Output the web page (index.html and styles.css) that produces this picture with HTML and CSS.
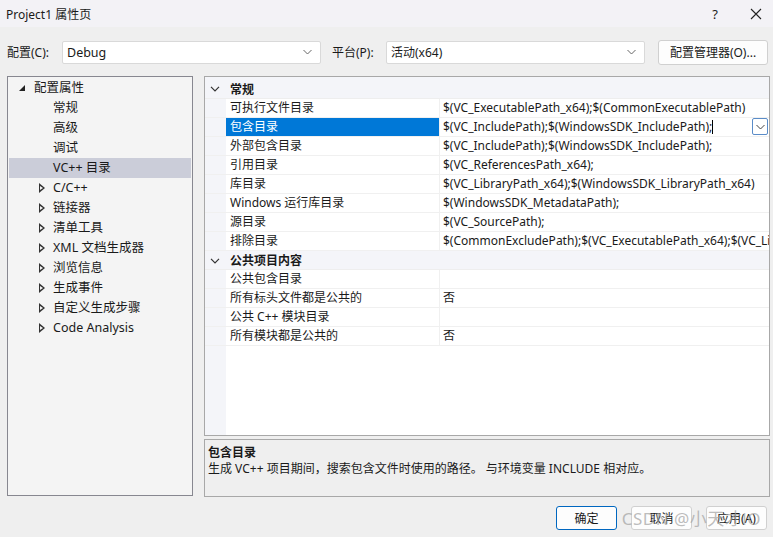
FILE: index.html
```html
<!DOCTYPE html>
<html lang="zh-CN">
<head>
    <meta charset="UTF-8">
    <title>Project1 属性页</title>
    <link rel="stylesheet" href="styles.css">
</head>
<body>
    <div class="dialog">
        <!-- Title bar -->
        <div class="titlebar">
            <span class="title">Project1 属性页</span>
            <span class="title-btns">
                <span class="help">?</span>
                <svg class="close" width="12" height="12" viewBox="0 0 12 12"><path d="M1 1L11 11M11 1L1 11" stroke="#222" stroke-width="1.1" fill="none"/></svg>
            </span>
        </div>

        <!-- Config row -->
        <div class="config-row">
            <label class="lbl">配置(C):</label>
            <div class="combo combo-config">
                <span>Debug</span>
                <svg class="chev" width="9" height="6" viewBox="0 0 9 6"><path d="M0.5 1L4.5 5L8.5 1" stroke="#666" fill="none"/></svg>
            </div>
            <label class="lbl lbl-platform">平台(P):</label>
            <div class="combo combo-platform">
                <span>活动(x64)</span>
                <svg class="chev" width="9" height="6" viewBox="0 0 9 6"><path d="M0.5 1L4.5 5L8.5 1" stroke="#666" fill="none"/></svg>
            </div>
            <button class="btn btn-manager">配置管理器(O)...</button>
        </div>

        <!-- Main area -->
        <div class="main">
            <div class="tree">
                <div class="tree-row lvl0"><span class="expanded"></span>配置属性</div>
                <div class="tree-row lvl1">常规</div>
                <div class="tree-row lvl1">高级</div>
                <div class="tree-row lvl1">调试</div>
                <div class="tree-row lvl1 selected">VC++ 目录</div>
                <div class="tree-row lvl1"><span class="collapsed"></span>C/C++</div>
                <div class="tree-row lvl1"><span class="collapsed"></span>链接器</div>
                <div class="tree-row lvl1"><span class="collapsed"></span>清单工具</div>
                <div class="tree-row lvl1"><span class="collapsed"></span>XML 文档生成器</div>
                <div class="tree-row lvl1"><span class="collapsed"></span>浏览信息</div>
                <div class="tree-row lvl1"><span class="collapsed"></span>生成事件</div>
                <div class="tree-row lvl1"><span class="collapsed"></span>自定义生成步骤</div>
                <div class="tree-row lvl1"><span class="collapsed"></span>Code Analysis</div>
            </div>

            <div class="right">
                <div class="grid">
                    <div class="cat-row first">
                        <svg class="cat-chev" width="10" height="6" viewBox="0 0 10 6"><path d="M1 0.8L5 4.8L9 0.8" stroke="#333" stroke-width="1.2" fill="none"/></svg>
                        <span>常规</span>
                    </div>
                    <div class="prop-row"><div class="name">可执行文件目录</div><div class="value">$(VC_ExecutablePath_x64);$(CommonExecutablePath)</div></div>
                    <div class="prop-row active"><div class="name">包含目录</div><div class="value">$(VC_IncludePath);$(WindowsSDK_IncludePath);<span class="caret"></span>
                        <span class="drop"><svg width="9" height="6" viewBox="0 0 9 6"><path d="M0.5 1L4.5 5L8.5 1" stroke="#444" fill="none"/></svg></span></div></div>
                    <div class="prop-row"><div class="name">外部包含目录</div><div class="value">$(VC_IncludePath);$(WindowsSDK_IncludePath);</div></div>
                    <div class="prop-row"><div class="name">引用目录</div><div class="value">$(VC_ReferencesPath_x64);</div></div>
                    <div class="prop-row"><div class="name">库目录</div><div class="value">$(VC_LibraryPath_x64);$(WindowsSDK_LibraryPath_x64)</div></div>
                    <div class="prop-row"><div class="name">Windows 运行库目录</div><div class="value">$(WindowsSDK_MetadataPath);</div></div>
                    <div class="prop-row"><div class="name">源目录</div><div class="value">$(VC_SourcePath);</div></div>
                    <div class="prop-row"><div class="name">排除目录</div><div class="value">$(CommonExcludePath);$(VC_ExecutablePath_x64);$(VC_LibraryPath_x64)</div></div>
                    <div class="cat-row">
                        <svg class="cat-chev" width="10" height="6" viewBox="0 0 10 6"><path d="M1 0.8L5 4.8L9 0.8" stroke="#333" stroke-width="1.2" fill="none"/></svg>
                        <span>公共项目内容</span>
                    </div>
                    <div class="prop-row"><div class="name">公共包含目录</div><div class="value"></div></div>
                    <div class="prop-row"><div class="name">所有标头文件都是公共的</div><div class="value">否</div></div>
                    <div class="prop-row"><div class="name">公共 C++ 模块目录</div><div class="value"></div></div>
                    <div class="prop-row"><div class="name">所有模块都是公共的</div><div class="value">否</div></div>
                    <div class="gutter-fill"></div>
                </div>
                <div class="desc">
                    <div class="desc-title">包含目录</div>
                    <div class="desc-text">生成 VC++ 项目期间，搜索包含文件时使用的路径。 与环境变量 INCLUDE 相对应。</div>
                </div>
            </div>
        </div>

        <!-- Bottom buttons -->
        <div class="footer">
            <button class="btn btn-ok">确定</button>
            <button class="btn">取消</button>
            <button class="btn">应用(A)</button>
            <span class="watermark">CSDN @小天才lO</span>
        </div>
    </div>
</body>
</html>
```

FILE: styles.css
```css
body {
    margin: 0;
    padding: 0;
    background: #efefef;
    font-family: "Noto Sans", "Noto Sans CJK SC", sans-serif;
    font-size: 12px;
    color: #1a1a1a;
}

.dialog {
    width: 773px;
    height: 537px;
    display: flex;
    flex-direction: column;
    overflow: hidden;
    position: relative;
}

/* Title bar */
.titlebar {
    height: 27px;
    background: #f3f2f6;
    display: flex;
    align-items: center;
    justify-content: space-between;
    padding: 0 11px 0 6px;
    flex-shrink: 0;
}
.title {
    font-size: 12px;
}
.title-btns {
    display: flex;
    align-items: center;
    gap: 32px;
}
.help {
    font-size: 13px;
}

/* Config row */
.config-row {
    display: flex;
    align-items: center;
    height: 26px;
    margin-top: 12px;
    padding-left: 7px;
}
.lbl {
    width: 55px;
    font-size: 12px;
}
.lbl-platform {
    width: 54px;
    margin-left: 11px;
}
.combo {
    width: 259px;
    height: 23px;
    box-sizing: border-box;
    background: #fff;
    border: 1px solid #d9d9d9;
    border-radius: 2px;
    display: flex;
    align-items: center;
    justify-content: space-between;
    padding: 0 8px 0 4px;
    font-size: 12.5px;
}
.combo-platform {
    font-size: 12px;
}
.btn {
    font-family: inherit;
    font-size: 12px;
    background: #fdfdfd;
    border: 1px solid #d0d0d0;
    border-radius: 3px;
    height: 25px;
    padding: 0;
    color: #1a1a1a;
}
.btn-manager {
    width: 110px;
    margin-left: 13px;
}

/* Main */
.main {
    display: flex;
    margin-top: 11px;
    padding-left: 7px;
    gap: 10px;
}
.tree {
    width: 186px;
    height: 420px;
    box-sizing: border-box;
    background: #f4f4f4;
    border: 1px solid #878790;
    padding: 1px 1px;
    font-size: 12.5px;
}
.tree-row {
    height: 20px;
    line-height: 20px;
    position: relative;
    white-space: nowrap;
}
.tree-row.lvl0 {
    padding-left: 25px;
}
.tree-row.lvl1 {
    padding-left: 44px;
}
.tree-row.selected {
    background: #cbcdd9;
}
.expanded {
    position: absolute;
    left: 10px;
    top: 7px;
    width: 0;
    height: 0;
    border-left: 6px solid transparent;
    border-bottom: 6px solid #222;
}
.collapsed {
    position: absolute;
    left: 30px;
    top: 5px;
    width: 6px;
    height: 10px;
}
.collapsed::before {
    content: "";
    position: absolute;
    left: 0;
    top: 0;
    border-top: 5px solid transparent;
    border-bottom: 5px solid transparent;
    border-left: 6px solid #333;
}
.collapsed::after {
    content: "";
    position: absolute;
    left: 1px;
    top: 2.5px;
    border-top: 2.5px solid transparent;
    border-bottom: 2.5px solid transparent;
    border-left: 3px solid #f4f4f4;
}

/* Property grid */
.right {
    width: 566px;
    display: flex;
    flex-direction: column;
    gap: 3px;
    margin-left: 1px;
}
.grid {
    height: 360px;
    box-sizing: border-box;
    background: #fff;
    border: 1px solid #a8a8a8;
    overflow: hidden;
    display: flex;
    flex-direction: column;
}
.cat-row {
    height: 19px;
    flex-shrink: 0;
    display: flex;
    align-items: center;
    background: #f4f5f9;
    font-weight: bold;
    padding-left: 25px;
    position: relative;
    border-bottom: 1px solid #eeeeee;
    box-sizing: border-box;
}
.cat-row.first {
    height: 22px;
    padding-top: 2px;
}
.cat-chev {
    position: absolute;
    left: 5px;
    top: 7px;
}
.cat-row.first .cat-chev {
    top: 9px;
}
.prop-row {
    height: 19px;
    flex-shrink: 0;
    display: flex;
    padding-left: 21px;
    background: linear-gradient(to right, #f4f5f9 21px, #fff 21px);
    border-bottom: 1px solid #f0f0f0;
    box-sizing: border-box;
    white-space: nowrap;
}
.gutter-fill {
    flex: 1;
    width: 21px;
    background: #f4f5f9;
}
.name {
    width: 214px;
    box-sizing: border-box;
    padding-left: 4px;
    line-height: 18px;
    border-right: 1px solid #f0f0f0;
    flex-shrink: 0;
}
.value {
    flex: 1;
    padding-left: 3px;
    line-height: 18px;
    overflow: hidden;
    position: relative;
}
.prop-row.active .name {
    background: #0078d7;
    color: #fff;
}
.caret {
    display: inline-block;
    width: 1px;
    height: 14px;
    background: #000;
    vertical-align: -3px;
}
.drop {
    position: absolute;
    right: 1px;
    top: 0;
    width: 16px;
    height: 17px;
    box-sizing: border-box;
    border: 1px solid #5a8cc8;
    border-radius: 2px;
    background: #fff;
    display: flex;
    align-items: center;
    justify-content: center;
}

/* Description */
.desc {
    height: 58px;
    box-sizing: border-box;
    border: 1px solid #a8a8a8;
    background: #efefef;
    padding: 5px 3px;
    line-height: 16px;
}
.desc-title {
    font-weight: bold;
}

/* Footer */
.footer {
    display: flex;
    justify-content: flex-end;
    gap: 14px;
    padding-right: 6px;
    margin-top: 9px;
}
.footer .btn {
    width: 61px;
    height: 24px;
}
.footer .btn-ok {
    border: 1px solid #0067c0;
    background: #fdfdfd;
}
.watermark {
    position: absolute;
    right: 12px;
    bottom: 7px;
    font-size: 17px;
    color: rgba(160, 160, 160, 0.7);
    letter-spacing: 0.5px;
    pointer-events: none;
}
```
